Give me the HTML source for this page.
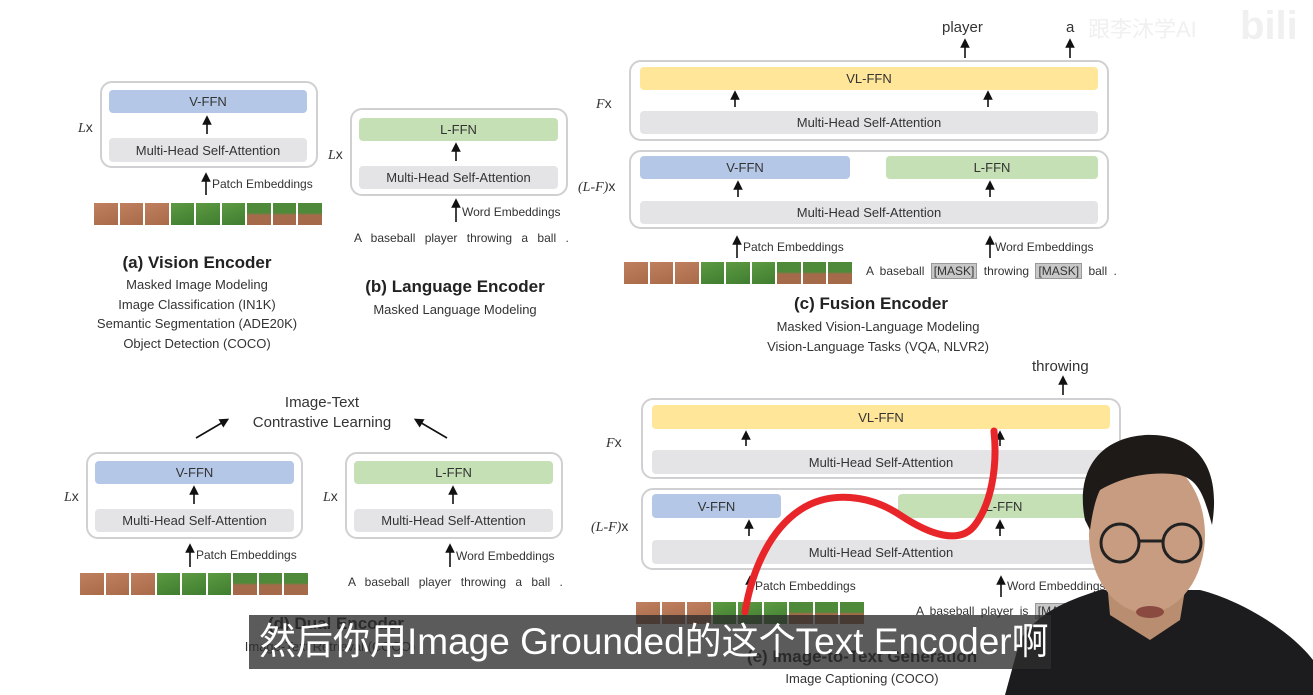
<!DOCTYPE html>
<html><head><meta charset="utf-8"><style>
*{margin:0;padding:0;box-sizing:border-box}
body{width:1313px;height:695px;background:#fff;position:relative;overflow:hidden;font-family:"Liberation Sans",Arial,sans-serif;color:#333}
.a{position:absolute}
.box{position:absolute;border:2px solid #d0d0d2;border-radius:12px;background:#fff}
.bar{position:absolute;border-radius:4px;font-size:13px;color:#333;display:flex;align-items:center;justify-content:center}
.b{background:#b4c7e7}.g{background:#c5e0b4}.y{background:#ffe699}.m{background:#e4e4e6}
.t{position:absolute;font-size:12px;color:#333;white-space:nowrap}
.c{position:absolute;text-align:center;font-size:13px;color:#333;white-space:nowrap;transform:translateX(-50%);line-height:19.5px}
.h{font-weight:bold;font-size:17px;color:#222;line-height:22px}
.it{font-family:"Liberation Serif",serif;font-style:italic;font-size:14px}
.strip{position:absolute;display:flex;gap:2px;height:22px}
.strip i{width:23.5px;height:22px;display:block}
.br{background:linear-gradient(160deg,#c08060,#a86a48)}
.gr{background:linear-gradient(160deg,#5e9a42,#3f7d30)}
.mx{background:linear-gradient(180deg,#4f8a3a 45%,#a46a4a 55%)}
.mask{background:#c8c8c8;padding:0 2px;border:1px solid #999}
.sent{word-spacing:6px}
</style></head><body>

<!-- (a) -->
<div class="box" style="left:100px;top:81px;width:218px;height:87px"></div>
<div class="bar b" style="left:109px;top:90px;width:198px;height:23px">V-FFN</div>
<div class="bar m" style="left:109px;top:138px;width:198px;height:24px">Multi-Head Self-Attention</div>
<div class="t it" style="left:78px;top:119px"><span>L</span><span style="font-style:normal;font-family:'Liberation Sans'">x</span></div>
<div class="t" style="left:212px;top:177px">Patch Embeddings</div>
<div class="strip" style="left:94px;top:203px"><i class="br"></i><i class="br"></i><i class="br"></i><i class="gr"></i><i class="gr"></i><i class="gr"></i><i class="mx"></i><i class="mx"></i><i class="mx"></i></div>
<div class="c h" style="left:197px;top:252px">(a) Vision Encoder</div>
<div class="c" style="left:197px;top:275px">Masked Image Modeling<br>Image Classification (IN1K)<br>Semantic Segmentation (ADE20K)<br>Object Detection (COCO)</div>

<!-- (b) -->
<div class="box" style="left:350px;top:108px;width:218px;height:88px"></div>
<div class="bar g" style="left:359px;top:118px;width:199px;height:23px">L-FFN</div>
<div class="bar m" style="left:359px;top:166px;width:199px;height:23px">Multi-Head Self-Attention</div>
<div class="t it" style="left:328px;top:146px">L<span style="font-style:normal;font-family:'Liberation Sans'">x</span></div>
<div class="t" style="left:462px;top:205px">Word Embeddings</div>
<div class="t sent" style="left:354px;top:231px">A baseball player throwing a ball .</div>
<div class="c h" style="left:455px;top:276px">(b) Language Encoder</div>
<div class="c" style="left:455px;top:300px">Masked Language Modeling</div>

<!-- (c) -->
<div class="t" style="left:942px;top:19px;font-size:15px">player</div>
<div class="t" style="left:1066px;top:19px;font-size:15px">a</div>
<div class="box" style="left:629px;top:60px;width:480px;height:81px"></div>
<div class="bar y" style="left:640px;top:67px;width:458px;height:23px">VL-FFN</div>
<div class="bar m" style="left:640px;top:111px;width:458px;height:23px">Multi-Head Self-Attention</div>
<div class="t it" style="left:596px;top:95px">F<span style="font-style:normal;font-family:'Liberation Sans'">x</span></div>
<div class="box" style="left:629px;top:150px;width:480px;height:79px"></div>
<div class="bar b" style="left:640px;top:156px;width:210px;height:23px">V-FFN</div>
<div class="bar g" style="left:886px;top:156px;width:212px;height:23px">L-FFN</div>
<div class="bar m" style="left:640px;top:201px;width:458px;height:23px">Multi-Head Self-Attention</div>
<div class="t it" style="left:578px;top:178px">(L-F)<span style="font-style:normal;font-family:'Liberation Sans'">x</span></div>
<div class="t" style="left:743px;top:240px">Patch Embeddings</div>
<div class="t" style="left:995px;top:240px">Word Embeddings</div>
<div class="strip" style="left:624px;top:262px"><i class="br"></i><i class="br"></i><i class="br"></i><i class="gr"></i><i class="gr"></i><i class="gr"></i><i class="mx"></i><i class="mx"></i><i class="mx"></i></div>
<div class="t" style="left:866px;top:264px;word-spacing:3px">A baseball <span class="mask">[MASK]</span> throwing <span class="mask">[MASK]</span> ball .</div>
<div class="c h" style="left:871px;top:293px">(c) Fusion Encoder</div>
<div class="c" style="left:878px;top:317px">Masked Vision-Language Modeling<br>Vision-Language Tasks (VQA, NLVR2)</div>

<!-- (d) -->
<div class="c" style="left:322px;top:393px;font-size:15px;line-height:20px">Image-Text<br>Contrastive Learning</div>
<div class="box" style="left:86px;top:452px;width:217px;height:87px"></div>
<div class="bar b" style="left:95px;top:461px;width:199px;height:23px">V-FFN</div>
<div class="bar m" style="left:95px;top:509px;width:199px;height:23px">Multi-Head Self-Attention</div>
<div class="t it" style="left:64px;top:488px">L<span style="font-style:normal;font-family:'Liberation Sans'">x</span></div>
<div class="box" style="left:345px;top:452px;width:218px;height:87px"></div>
<div class="bar g" style="left:354px;top:461px;width:199px;height:23px">L-FFN</div>
<div class="bar m" style="left:354px;top:509px;width:199px;height:23px">Multi-Head Self-Attention</div>
<div class="t it" style="left:323px;top:488px">L<span style="font-style:normal;font-family:'Liberation Sans'">x</span></div>
<div class="t" style="left:196px;top:548px">Patch Embeddings</div>
<div class="t" style="left:456px;top:549px">Word Embeddings</div>
<div class="strip" style="left:80px;top:573px"><i class="br"></i><i class="br"></i><i class="br"></i><i class="gr"></i><i class="gr"></i><i class="gr"></i><i class="mx"></i><i class="mx"></i><i class="mx"></i></div>
<div class="t sent" style="left:348px;top:575px">A baseball player throwing a ball .</div>
<div class="c h" style="left:336px;top:613px">(d) Dual Encoder</div>
<div class="c" style="left:330px;top:637px">Image-Text Retrieval (COCO)</div>

<!-- (e) -->
<div class="t" style="left:1032px;top:358px;font-size:15px">throwing</div>
<div class="box" style="left:641px;top:398px;width:480px;height:81px"></div>
<div class="bar y" style="left:652px;top:405px;width:458px;height:24px">VL-FFN</div>
<div class="bar m" style="left:652px;top:450px;width:458px;height:24px">Multi-Head Self-Attention</div>
<div class="t it" style="left:606px;top:434px">F<span style="font-style:normal;font-family:'Liberation Sans'">x</span></div>
<div class="box" style="left:641px;top:488px;width:480px;height:82px"></div>
<div class="bar b" style="left:652px;top:494px;width:129px;height:24px">V-FFN</div>
<div class="bar g" style="left:898px;top:494px;width:212px;height:24px">L-FFN</div>
<div class="bar m" style="left:652px;top:540px;width:458px;height:24px">Multi-Head Self-Attention</div>
<div class="t it" style="left:591px;top:518px">(L-F)<span style="font-style:normal;font-family:'Liberation Sans'">x</span></div>
<div class="t" style="left:755px;top:579px">Patch Embeddings</div>
<div class="t" style="left:1007px;top:579px">Word Embeddings</div>
<div class="strip" style="left:636px;top:602px"><i class="br"></i><i class="br"></i><i class="br"></i><i class="gr"></i><i class="gr"></i><i class="gr"></i><i class="mx"></i><i class="mx"></i><i class="mx"></i></div>
<div class="t" style="left:916px;top:604px;word-spacing:3px">A baseball player is <span class="mask">[MASK]</span></div>
<div class="c h" style="left:862px;top:646px">(e) Image-to-Text Generation</div>
<div class="c" style="left:862px;top:669px">Image Captioning (COCO)</div>

<svg class="a" style="left:0;top:0" width="1313" height="695">
<defs><marker id="ar" markerWidth="6" markerHeight="6" refX="3" refY="3" orient="auto"><path d="M0,0L6,3L0,6z" fill="#111"/></marker></defs>
<g stroke="#111" stroke-width="1.6" marker-end="url(#ar)">
<line x1="207" y1="134" x2="207" y2="120"/>
<line x1="206" y1="195" x2="206" y2="177"/>
<line x1="456" y1="161" x2="456" y2="147"/>
<line x1="456" y1="222" x2="456" y2="203"/>
<line x1="965" y1="58" x2="965" y2="43"/>
<line x1="1070" y1="58" x2="1070" y2="43"/>
<line x1="735" y1="107" x2="735" y2="95"/>
<line x1="988" y1="107" x2="988" y2="95"/>
<line x1="738" y1="197" x2="738" y2="185"/>
<line x1="990" y1="197" x2="990" y2="185"/>
<line x1="737" y1="258" x2="737" y2="240"/>
<line x1="990" y1="258" x2="990" y2="240"/>
<line x1="194" y1="504" x2="194" y2="490"/>
<line x1="453" y1="504" x2="453" y2="490"/>
<line x1="190" y1="567" x2="190" y2="548"/>
<line x1="450" y1="567" x2="450" y2="548"/>
<line x1="196" y1="438" x2="225" y2="421"/>
<line x1="447" y1="438" x2="418" y2="421"/>
<line x1="1063" y1="395" x2="1063" y2="380"/>
<line x1="746" y1="446" x2="746" y2="435"/>
<line x1="1000" y1="446" x2="1000" y2="435"/>
<line x1="749" y1="536" x2="749" y2="524"/>
<line x1="1000" y1="536" x2="1000" y2="524"/>
<line x1="750" y1="597" x2="750" y2="580"/>
<line x1="1001" y1="597" x2="1001" y2="580"/>
</g>
<path d="M994,431 C998,470 990,505 975,525 C960,545 930,535 900,515 C870,495 830,490 800,510 C770,530 752,570 745,612" fill="none" stroke="#e8262a" stroke-width="7" stroke-linecap="round"/>
<!-- person -->
<path d="M1005,695 L1020,640 C1040,610 1070,600 1100,590 L1200,590 C1240,600 1290,630 1313,660 L1313,695Z" fill="#1c1c1e"/>
<path d="M1105,560 L1110,615 L1150,640 L1180,620 L1190,560Z" fill="#b98e70"/>
<ellipse cx="1147" cy="535" rx="58" ry="78" fill="#c89c80"/>
<path d="M1085,520 C1075,470 1100,438 1145,435 C1195,433 1222,465 1212,525 C1205,500 1200,480 1180,475 C1150,470 1120,478 1100,490 C1095,500 1092,515 1090,530Z" fill="#1e1a18"/>
<circle cx="1120" cy="543" r="19" fill="none" stroke="#222" stroke-width="3"/>
<circle cx="1182" cy="543" r="19" fill="none" stroke="#222" stroke-width="3"/>
<line x1="1139" y1="541" x2="1163" y2="541" stroke="#222" stroke-width="3"/>
<ellipse cx="1150" cy="612" rx="14" ry="6" fill="#8a4a40"/>
</svg>

<div class="a" style="left:1088px;top:12px;font-size:22px;color:#f0f0f0;font-family:'Liberation Sans','Noto Sans CJK SC',sans-serif">跟李沐学AI</div>
<div class="a" style="left:1240px;top:4px;font-size:40px;font-weight:bold;color:#f0f0f0">bili</div>

<div class="a" style="left:249px;top:615px;width:802px;height:54px;background:rgba(45,45,45,0.78);color:#fff;font-size:37px;line-height:54px;padding-left:10px;white-space:nowrap;overflow:hidden;font-family:'Liberation Sans','Noto Sans CJK SC',sans-serif">然后你用Image Grounded的这个Text Encoder啊</div>
</body></html>
